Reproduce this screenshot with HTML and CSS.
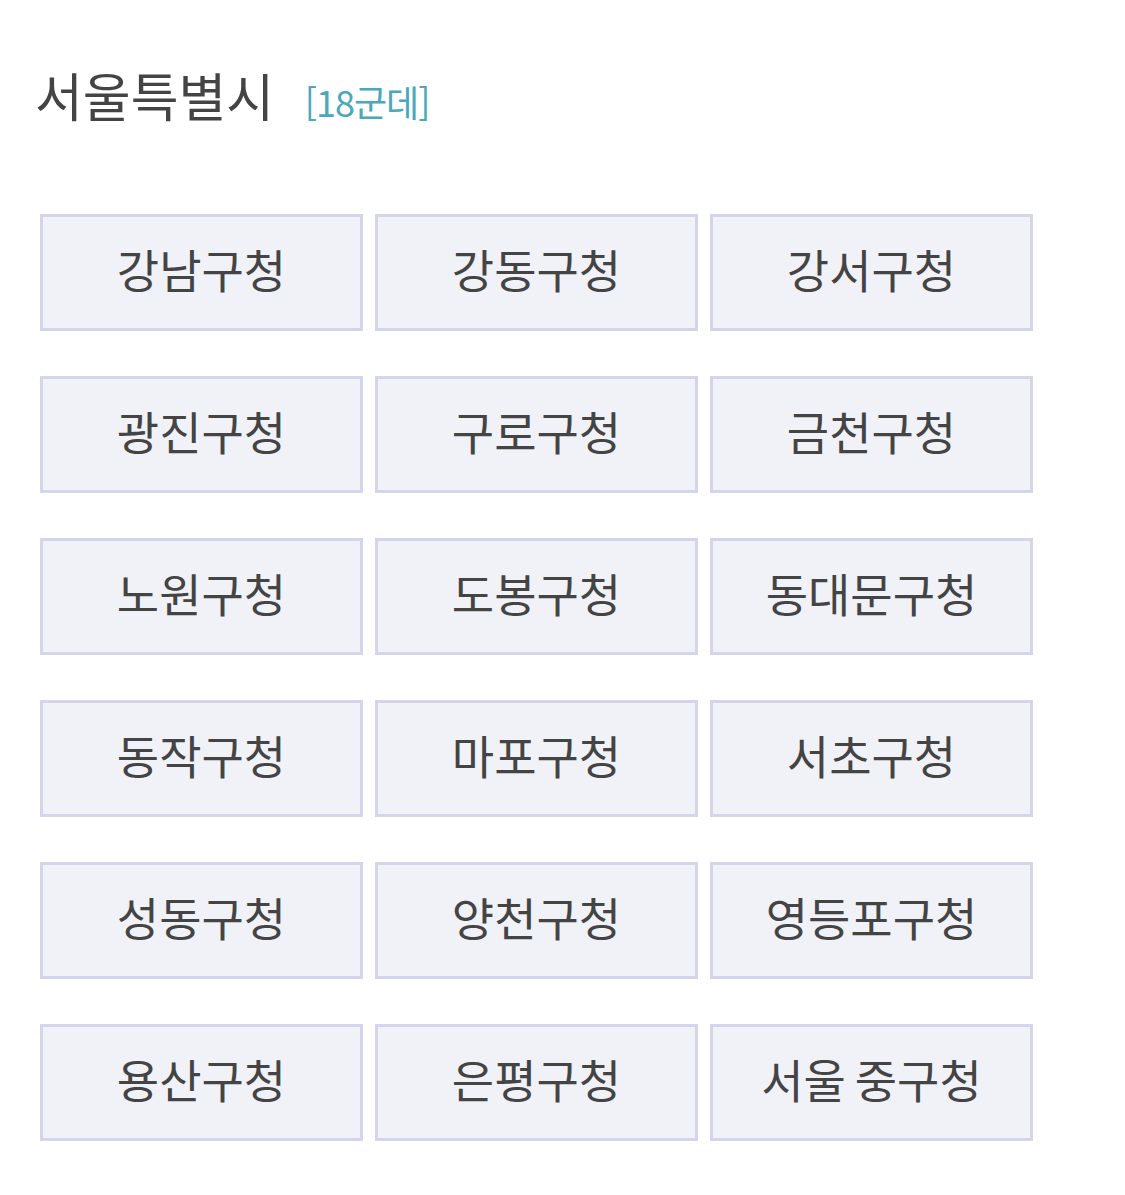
FILE: index.html
```html
<!DOCTYPE html>
<html lang="ko">
<head>
  <meta charset="UTF-8" />
  <meta name="viewport" content="width=device-width, initial-scale=1.0" />
  <title>서울특별시 구청</title>
  <link rel="stylesheet" href="styles.css">
</head>
<body>
  <div class="wrap">
    <h1 class="title">서울특별시 <span class="count">[18군데]</span></h1>

    <ul class="office-list">
      <li class="office">강남구청</li>
      <li class="office">강동구청</li>
      <li class="office">강서구청</li>
      <li class="office">광진구청</li>
      <li class="office">구로구청</li>
      <li class="office">금천구청</li>
      <li class="office">노원구청</li>
      <li class="office">도봉구청</li>
      <li class="office">동대문구청</li>
      <li class="office">동작구청</li>
      <li class="office">마포구청</li>
      <li class="office">서초구청</li>
      <li class="office">성동구청</li>
      <li class="office">양천구청</li>
      <li class="office">영등포구청</li>
      <li class="office">용산구청</li>
      <li class="office">은평구청</li>
      <li class="office">서울 중구청</li>
    </ul>
  </div>
</body>
</html>
```

FILE: styles.css
```css
:root {
  --text: #444;
  --accent: #4aa8bd;
  --box-bg: #f1f2f8;
  --box-border: #d4d5ea;
}

* {
  box-sizing: border-box;
  margin: 0;
  padding: 0;
}

body {
  font-family: "Noto Sans CJK KR", "Noto Sans", sans-serif;
  background: #fff;
  color: var(--text);
}

.wrap {
  padding: 60px 40px 40px;
}

.title {
  font-size: 52px;
  font-weight: 400;
  line-height: 70px;
  margin-left: -5px;
  color: var(--text);
}

.count {
  font-size: 36px;
  color: var(--accent);
  margin-left: 16px;
  letter-spacing: -1px;
}

.office-list {
  list-style: none;
  display: grid;
  grid-template-columns: repeat(3, 323px);
  gap: 45px 12px;
  margin-top: 78px;
}

.office {
  height: 117px;
  display: flex;
  align-items: center;
  justify-content: center;
  padding-bottom: 10px;
  background: var(--box-bg);
  border: 3px solid var(--box-border);
  font-size: 46px;
  word-spacing: -4px;
  color: var(--text);
}
```
